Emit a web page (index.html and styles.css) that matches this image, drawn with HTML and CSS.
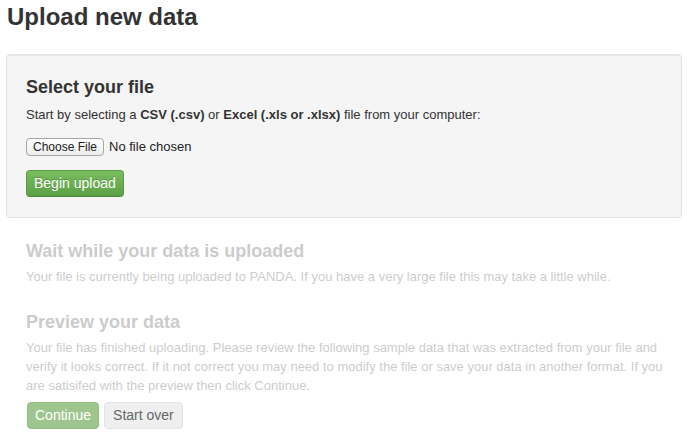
FILE: index.html
```html
<!DOCTYPE html>
<html>
<head>
<meta charset="utf-8">
<link rel="stylesheet" href="styles.css">
</head>
<body>
<div class="page">
  <h1 class="title">Upload new data</h1>
  <div class="well">
    <h3 class="step-title">Select your file</h3>
    <p class="text">Start by selecting a <b>CSV (.csv)</b> or <b>Excel (.xls or .xlsx)</b> file from your computer:</p>
    <div class="file-row">
      <button class="file-btn" type="button">Choose File</button>
      <span class="file-name">No file chosen</span>
    </div>
    <button class="btn btn-success" type="button">Begin upload</button>
  </div>
  <div class="step faded">
    <h3 class="step-title">Wait while your data is uploaded</h3>
    <p class="text">Your file is currently being uploaded to PANDA. If you have a very large file this may take a little while.</p>
  </div>
  <div class="step faded">
    <h3 class="step-title">Preview your data</h3>
    <p class="text">Your file has finished uploading. Please review the following sample data that was extracted from your file and verify it looks correct. If it not correct you may need to modify the file or save your data in another format. If you are satisifed with the preview then click Continue.</p>
  </div>
  <div class="actions">
    <button class="btn btn-continue" type="button">Continue</button>
    <button class="btn btn-over" type="button">Start over</button>
  </div>
</div>
</body>
</html>
```

FILE: styles.css
```css
html, body {
  margin: 0;
  padding: 0;
  background: #ffffff;
}
body {
  font-family: "Liberation Sans", Arial, Helvetica, sans-serif;
  color: #333333;
  font-size: 13px;
  line-height: 19px;
}
.page {
  padding: 0 5px 0 6px;
}
.title {
  margin: 0;
  padding-top: 2px;
  padding-left: 1px;
  font-size: 24px;
  line-height: 30px;
  font-weight: bold;
  color: #333333;
}
.well {
  margin-top: 22px;
  background: #f5f5f5;
  border: 1px solid #e3e3e3;
  border-radius: 4px;
  box-shadow: inset 0 1px 1px rgba(0,0,0,0.05);
  padding: 19px 19px 20px 19px;
  display: flex;
  flex-direction: column;
  align-items: flex-start;
}
.step-title {
  margin: 0;
  font-size: 18px;
  line-height: 22px;
  font-weight: bold;
  color: #333333;
}
.well .step-title {
  margin-top: 2px;
}
.text {
  margin: 7px 0 0 0;
  font-size: 13px;
  line-height: 19px;
}
.step .text {
  margin-top: 5px;
}
.file-row {
  margin-top: 13px;
  display: flex;
  align-items: center;
  gap: 5px;
}
.file-btn {
  font-family: "Liberation Sans", Arial, sans-serif;
  font-size: 12px;
  color: #222222;
  height: 18px;
  padding: 0 6px;
  border: 1px solid #a6a6a6;
  border-radius: 4px;
  background: linear-gradient(#ffffff, #ededed);
  line-height: 16px;
  white-space: nowrap;
}
.file-name {
  font-size: 13px;
  color: #222222;
}
.btn {
  font-family: "Liberation Sans", Arial, sans-serif;
  font-size: 14px;
  line-height: 19px;
  height: 27px;
  padding: 0 7px;
  border-radius: 4px;
  white-space: nowrap;
  cursor: pointer;
}
.btn-success {
  margin-top: 14px;
  color: #ffffff;
  text-shadow: 0 -1px 0 rgba(0,0,0,0.2);
  background: linear-gradient(#7abd5f, #5ca046);
  border: 1px solid #5a9a44;
  border-bottom-color: #4c8a39;
}
.step {
  padding: 0 8px 0 20px;
}
.faded {
  opacity: 0.25;
}
.well + .step {
  margin-top: 22px;
}
.step + .step {
  margin-top: 25px;
}
.actions {
  padding-left: 21px;
  margin-top: 7px;
  display: flex;
  gap: 5px;
}
.btn-continue {
  padding: 0 7px;
  color: #ffffff;
  background: #9fc58e;
  border: 1px solid #95bb85;
}
.btn-over {
  padding: 0 8px;
  color: #666666;
  background: #efefef;
  border: 1px solid #e3e3e3;
}
```
